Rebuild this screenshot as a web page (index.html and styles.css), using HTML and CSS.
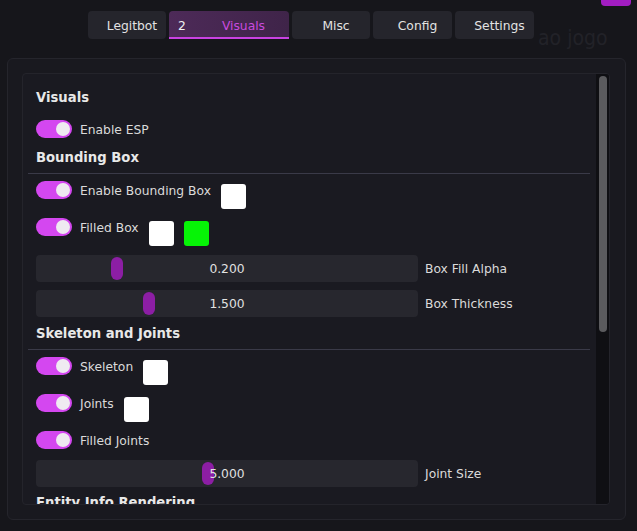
FILE: index.html
```html
<!DOCTYPE html>
<html>
<head>
<meta charset="utf-8">
<link rel="stylesheet" href="styles.css">
</head>
<body>
<div class="bgtext">ao jogo</div>
<div class="corner"></div>
<nav class="tabs">
  <div class="tab t-legit">Legitbot</div>
  <div class="tab active"><span class="num">2</span><span class="tname">Visuals</span></div>
  <div class="tab t-misc">Misc</div>
  <div class="tab">Config</div>
  <div class="tab">Settings</div>
</nav>
<div class="window">
  <div class="child">
    <div class="content">
      <div class="heading h-first">Visuals</div>
      <div class="row r-after-head"><span class="toggle"></span><span class="label">Enable ESP</span></div>
      <div class="heading h-after-row">Bounding Box</div>
      <div class="sep"></div>
      <div class="row r-after-sep"><span class="toggle"></span><span class="label">Enable Bounding Box</span><span class="swatch white"></span></div>
      <div class="row"><span class="toggle"></span><span class="label">Filled Box</span><span class="swatch white"></span><span class="swatch green"></span></div>
      <div class="srow s1">
        <div class="slider"><span class="grab" style="left:75px"></span><span class="val">0.200</span></div>
        <span class="slabel">Box Fill Alpha</span>
      </div>
      <div class="srow s2">
        <div class="slider"><span class="grab" style="left:107px"></span><span class="val">1.500</span></div>
        <span class="slabel">Box Thickness</span>
      </div>
      <div class="heading">Skeleton and Joints</div>
      <div class="sep"></div>
      <div class="row r-after-sep"><span class="toggle"></span><span class="label">Skeleton</span><span class="swatch white"></span></div>
      <div class="row"><span class="toggle"></span><span class="label">Joints</span><span class="swatch white"></span></div>
      <div class="row"><span class="toggle"></span><span class="label">Filled Joints</span></div>
      <div class="srow s3">
        <div class="slider"><span class="grab" style="left:166px"></span><span class="val">5.000</span></div>
        <span class="slabel">Joint Size</span>
      </div>
      <div class="heading h-last">Entity Info Rendering</div>
    </div>
    <div class="scroll"><div class="thumb"></div></div>
  </div>
</div>
</body>
</html>
```
FILE: styles.css
```css
html, body {
  margin: 0;
  padding: 0;
}
body {
  width: 637px;
  height: 531px;
  overflow: hidden;
  background: #16161b;
  font-family: "DejaVu Sans", Verdana, sans-serif;
  font-size: 12.3px;
  color: #dcdcdc;
  position: relative;
}
.bgtext {
  position: absolute;
  left: 538px;
  top: 26px;
  font-family: "DejaVu Sans Condensed", "DejaVu Sans", sans-serif;
  font-size: 21px;
  color: #222228;
  z-index: 0;
  white-space: nowrap;
}
.corner {
  position: absolute;
  left: 601px;
  top: 0;
  width: 30px;
  height: 6px;
  background: #a21dc2;
  border-radius: 0 0 4px 4px;
}
.tabs {
  position: relative;
  z-index: 1;
  display: flex;
  gap: 3px;
  margin: 11px 0 0 88px;
  height: 28px;
}
.tab {
  box-sizing: border-box;
  width: 79px;
  height: 28px;
  background: #25252c;
  border-radius: 4px;
  display: flex;
  align-items: center;
  justify-content: center;
  padding-left: 10px;
  padding-top: 1px;
  color: #e2e2e2;
}
.t-legit { width: 78px; }
.t-misc { width: 78px; }
.tab.active {
  width: 120px;
  justify-content: space-between;
  padding: 1px 24px 0 9px;
  border-radius: 4px 4px 0 0;
  background: linear-gradient(90deg, #4d2a58 0%, #3f2449 100%);
  box-shadow: inset 0 -2px 0 #c942e2;
}
.num { color: #f0f0f0; }
.tname { color: #c94bdf; }

.window {
  position: relative;
  z-index: 1;
  box-sizing: border-box;
  margin: 19px 0 0 7px;
  width: 619px;
  height: 462px;
  padding: 14px;
  background: #19191f;
  border: 1px solid #25252c;
  border-radius: 6px;
}
.child {
  box-sizing: border-box;
  width: 588px;
  height: 432px;
  display: flex;
  background: #1a1a21;
  border: 1px solid #24242b;
  border-radius: 4px;
  overflow: hidden;
}
.content {
  flex: 1;
  padding: 0 6px 0 13px;
  overflow: hidden;
  display: flex;
  flex-direction: column;
}
.scroll {
  width: 13px;
  background: #0f0f13;
  flex: none;
}
.thumb {
  width: 8px;
  height: 256px;
  margin: 2px 0 0 3px;
  background: #5b5b5e;
  border-radius: 4px;
}

.heading {
  font-weight: bold;
  font-size: 13.2px;
  line-height: 16px;
  height: 16px;
  color: #e8e8e8;
  margin-top: 9px;
  white-space: nowrap;
  flex: none;
}
.h-first { margin-top: 16px; }
.h-after-row { margin-top: 11px; }
.h-last { margin-top: 8px; }

.sep {
  height: 1px;
  background: #3a3a48;
  margin: 7px 0 0 -8px;
  flex: none;
}

.row {
  display: flex;
  align-items: flex-start;
  margin-top: 9px;
  flex: none;
}
.r-after-head { margin-top: 14px; }
.r-after-sep { margin-top: 7px; }

.toggle {
  position: relative;
  width: 36px;
  height: 18px;
  border-radius: 9px;
  background: #d447f0;
  flex: none;
}
.toggle::after {
  content: "";
  position: absolute;
  right: 2px;
  top: 2px;
  width: 14px;
  height: 14px;
  border-radius: 50%;
  background: #efeaf1;
}
.label {
  margin-left: 8px;
  line-height: 18px;
  margin-top: 1px;
  color: #dadada;
  white-space: nowrap;
}
.swatch {
  width: 25px;
  height: 25px;
  border-radius: 3px;
  margin: 3px 0 0 10px;
  flex: none;
}
.white { background: #ffffff; }
.green { background: #06f406; }

.srow {
  display: flex;
  align-items: center;
  gap: 7px;
  flex: none;
}
.s1 { margin-top: 9px; }
.s2 { margin-top: 8px; }
.s3 { margin-top: 10px; }
.slider {
  position: relative;
  width: 382px;
  height: 27px;
  background: #27272e;
  border-radius: 4px;
  display: flex;
  align-items: center;
  justify-content: center;
}
.grab {
  position: absolute;
  top: 2px;
  width: 12px;
  height: 23px;
  border-radius: 6px;
  background: #8c1ea4;
}
.val {
  position: relative;
  color: #e2e2e2;
}
.slabel {
  color: #dadada;
  white-space: nowrap;
}
```
